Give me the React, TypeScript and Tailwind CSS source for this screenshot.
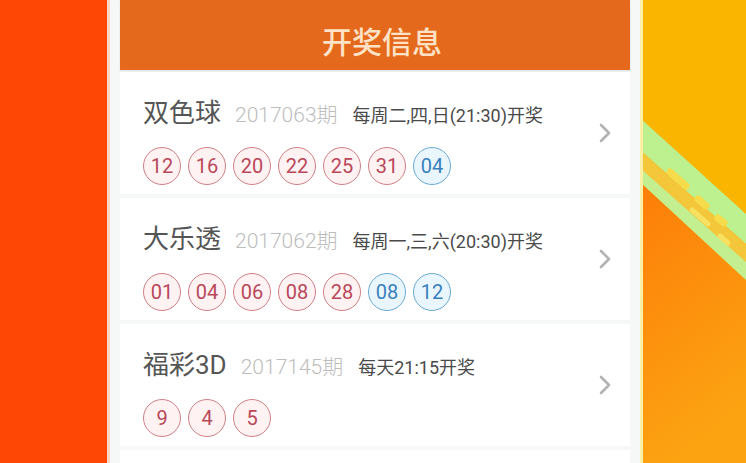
import React from 'react';

interface Lottery {
  name: string;
  issue: string;
  schedule: string;
  red: string[];
  blue: string[];
}

const lotteries: Lottery[] = [
  { name: '双色球', issue: '2017063期', schedule: '每周二,四,日(21:30)开奖', red: ['12', '16', '20', '22', '25', '31'], blue: ['04'] },
  { name: '大乐透', issue: '2017062期', schedule: '每周一,三,六(20:30)开奖', red: ['01', '04', '06', '08', '28'], blue: ['08', '12'] },
  { name: '福彩3D', issue: '2017145期', schedule: '每天21:15开奖', red: ['9', '4', '5'], blue: [] },
];

const font = { fontFamily: 'Roboto, "Noto Sans CJK SC", sans-serif' };

const Ball: React.FC<{ value: string; blue?: boolean }> = ({ value, blue }) => (
  <div
    className={`w-[38px] h-[38px] rounded-full border flex items-center justify-center text-[20px] leading-none ${
      blue ? 'border-[#6aaad6] bg-[#e9f6fd] text-[#3a80bd]' : 'border-[#cf7f86] bg-[#fff2f2] text-[#b9485a]'
    }`}
  >
    {value}
  </div>
);

const Chevron = () => (
  <svg width="14" height="22" viewBox="0 0 14 22" fill="none">
    <path d="M3 3 L11 11 L3 19" stroke="#b3b3b3" strokeWidth="2.6" strokeLinecap="round" strokeLinejoin="round" />
  </svg>
);

const LotteryRow: React.FC<{ item: Lottery }> = ({ item }) => (
  <div className="h-[122px] bg-white flex items-start">
    <div className="flex-1 pl-[23px] pt-[26px]">
      <div className="flex items-baseline h-[30px]">
        <span className="text-[26px] leading-[30px] text-[#555555]">{item.name}</span>
        <span className="text-[21px] font-light text-[#bdbdbd] ml-[14px]">{item.issue}</span>
        <span className="text-[18px] text-[#4a4a4a] ml-[15px]">{item.schedule}</span>
      </div>
      <div className="flex gap-[7px] mt-[19px]">
        {item.red.map((n, i) => (
          <Ball key={'r' + i} value={n} />
        ))}
        {item.blue.map((n, i) => (
          <Ball key={'b' + i} value={n} blue />
        ))}
      </div>
    </div>
    <div className="pt-[50px] pr-[18px]">
      <Chevron />
    </div>
  </div>
);

const Decoration = () => (
  <svg width="106" height="463" viewBox="0 0 106 463" preserveAspectRatio="none">
    <defs>
      <linearGradient id="bottomGrad" x1="0" y1="0" x2="0.3" y2="1">
        <stop offset="0" stopColor="#fd7d08" />
        <stop offset="1" stopColor="#fca312" />
      </linearGradient>
    </defs>
    <rect x="0" y="0" width="106" height="463" fill="#f9b500" />
    <polygon points="0,182 106,280 106,463 0,463" fill="url(#bottomGrad)" />
    <polygon points="0,118 106,214 106,244 0,150" fill="#bdf08e" />
    <polygon points="0,150 106,244 106,266 0,170" fill="#f4c63a" />
    <polygon points="0,168 106,262 106,280 0,182" fill="#c4ef90" />
    <g stroke="#f6dc4a" strokeWidth="7" strokeLinecap="round">
      <line x1="30" y1="172" x2="46" y2="186" />
      <line x1="58" y1="199" x2="66" y2="206" />
      <line x1="78" y1="218" x2="84" y2="223" />
    </g>
    <g stroke="#f8e060" strokeWidth="5" strokeLinecap="round">
      <line x1="52" y1="210" x2="68" y2="224" />
      <line x1="80" y1="236" x2="88" y2="243" />
    </g>
    <rect x="0" y="0" width="3" height="463" fill="#fff0a8" />
  </svg>
);

export default function App() {
  return (
    <div className="w-[746px] h-[463px] overflow-hidden flex" style={font}>
      <div className="w-[107px] bg-[#fe4705]" />
      <div className="w-[3px] bg-[#ffd6c6]" />
      <div className="w-[530px] bg-[#f6f8f8] px-[10px]">
        <div className="h-[70px] bg-[#e5691c] flex items-center justify-center pt-[14px] pl-[14px] shadow-[0_1px_2px_rgba(0,0,0,0.1)]">
          <span className="text-[30px] font-medium text-[#fde2c6]">开奖信息</span>
        </div>
        <div className="h-[2px]" />
        <div className="flex flex-col gap-[4px]">
          {lotteries.map((item) => (
            <LotteryRow key={item.name} item={item} />
          ))}
          <div className="h-[40px] bg-white" />
        </div>
      </div>
      <div className="flex-1">
        <Decoration />
      </div>
    </div>
  );
}
